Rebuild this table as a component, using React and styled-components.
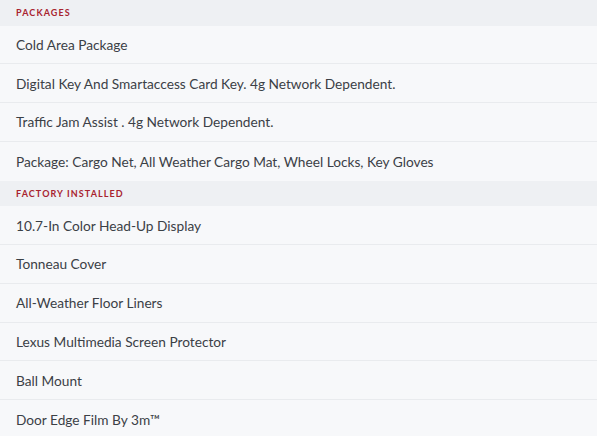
import React from 'react';
import styled, { createGlobalStyle } from 'styled-components';

const GlobalStyle = createGlobalStyle`
  html, body {
    margin: 0;
    padding: 0;
    background: #f7f8fa;
  }
  body {
    font-family: Lato, "Noto Sans", sans-serif;
  }
`;

const List = styled.div`
  width: 597px;
  display: flex;
  flex-direction: column;
`;

const SectionHeader = styled.div`
  height: 25.5px;
  box-sizing: border-box;
  padding: 0 16px;
  display: flex;
  align-items: center;
  background: #eef0f3;
  color: #a8232f;
  font-size: 9px;
  font-weight: 700;
  letter-spacing: 1.1px;
  text-transform: uppercase;
`;

const Row = styled.div`
  height: 38.8px;
  box-sizing: border-box;
  padding: 0 16px;
  display: flex;
  align-items: center;
  background: #f7f8fa;
  color: #3b4046;
  font-size: 13.7px;
  border-bottom: ${p => (p.$last ? 'none' : '1px solid #e9ebee')};
`;

const sections = [
  {
    title: 'Packages',
    items: [
      'Cold Area Package',
      'Digital Key And Smartaccess Card Key. 4g Network Dependent.',
      'Traffic Jam Assist . 4g Network Dependent.',
      'Package: Cargo Net, All Weather Cargo Mat, Wheel Locks, Key Gloves',
    ],
  },
  {
    title: 'Factory Installed',
    items: [
      '10.7-In Color Head-Up Display',
      'Tonneau Cover',
      'All-Weather Floor Liners',
      'Lexus Multimedia Screen Protector',
      'Ball Mount',
      'Door Edge Film By 3m™',
    ],
  },
];

export default function App() {
  return (
    <>
      <GlobalStyle />
      <List>
        {sections.map(section => (
          <React.Fragment key={section.title}>
            <SectionHeader>{section.title}</SectionHeader>
            {section.items.map((item, i) => (
              <Row key={item} $last={i === section.items.length - 1}>
                {item}
              </Row>
            ))}
          </React.Fragment>
        ))}
      </List>
    </>
  );
}
